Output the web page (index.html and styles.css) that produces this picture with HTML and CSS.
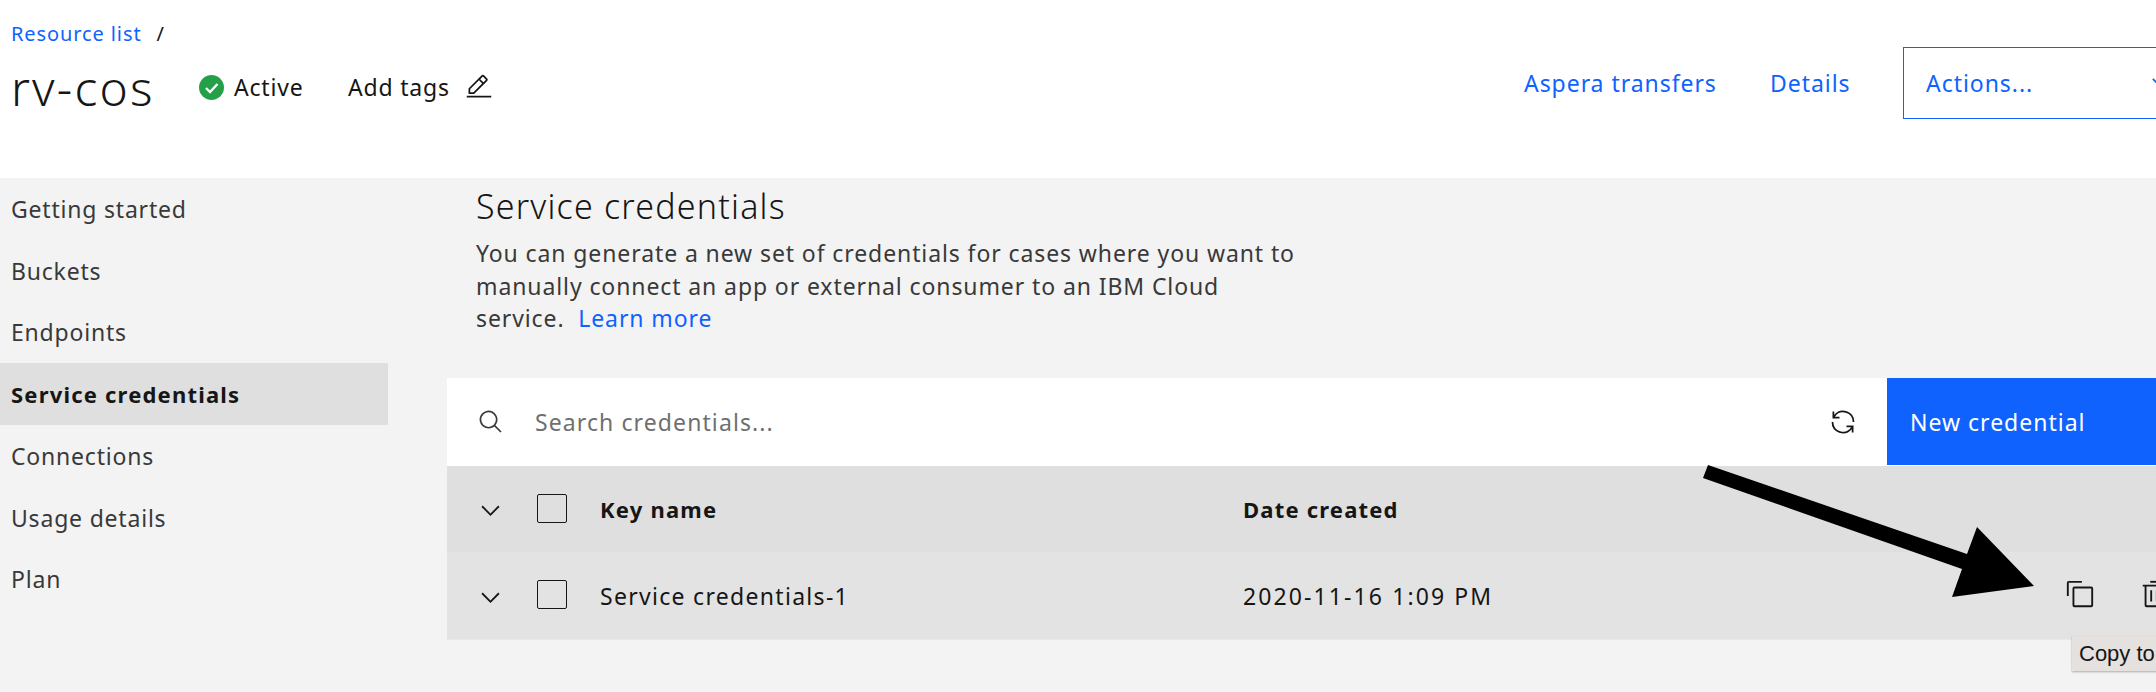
FILE: index.html
```html
<!DOCTYPE html>
<html lang="en">
<head>
    <meta charset="UTF-8">
    <title>rv-cos - Service credentials</title>
    <link rel="stylesheet" href="styles.css">
</head>
<body>

    <header class="page-header">
        <div class="crumbs">
            <a class="crumb-link">Resource list</a>
            <span class="crumb-sep">/</span>
        </div>
        <div class="title-row">
            <div class="title-left">
                <h1 class="name">rv-cos</h1>
                <div class="status">
                    <svg class="status-icon" viewBox="0 0 25 25"><circle cx="12.5" cy="12.5" r="12.5" fill="#24a148"/><path d="M7 13l4 4 7.5-8" fill="none" stroke="#fff" stroke-width="2.4"/></svg>
                    <span>Active</span>
                </div>
                <div class="tags">
                    <span>Add tags</span>
                    <svg class="icon-edit" viewBox="0 0 32 32"><path d="M2 26h28v2H2z"/><path d="M25.4 9c.8-.8.8-2 0-2.8l-3.6-3.6c-.8-.8-2-.8-2.8 0l-15 15V24h6.4l15-15zm-5-5L24 7.6l-3 3L17.4 7l3-3zM6 22v-3.6l10-10 3.6 3.6-10 10H6z"/></svg>
                </div>
            </div>
            <div class="title-right">
                <a class="head-link link-aspera">Aspera transfers</a>
                <a class="head-link link-details">Details</a>
                <div class="actions">
                    <span>Actions...</span>
                    <svg class="icon-chev-blue" viewBox="0 0 32 32"><path d="M16 22L6 12l1.4-1.4 8.6 8.6 8.6-8.6L26 12z"/></svg>
                </div>
            </div>
        </div>
    </header>

    <div class="main">
        <nav class="side">
            <a class="side-item">Getting started</a>
            <a class="side-item">Buckets</a>
            <a class="side-item">Endpoints</a>
            <a class="side-item active">Service credentials</a>
            <a class="side-item">Connections</a>
            <a class="side-item">Usage details</a>
            <a class="side-item">Plan</a>
        </nav>

        <section class="content">
            <div class="intro">
                <h2 class="intro-title">Service credentials</h2>
                <p class="intro-text">You can generate a new set of credentials for cases where you want to manually connect an app or external consumer to an IBM Cloud service.&nbsp; <a class="learn">Learn more</a></p>
            </div>

            <div class="toolbar">
                <svg class="icon-search" viewBox="0 0 32 32"><path d="M29 27.5859l-7.5521-7.5521a11.0177 11.0177 0 1 0-1.4141 1.4141L27.5859 29ZM4 13a9 9 0 1 1 9 9 9.01 9.01 0 0 1-9-9Z"/></svg>
                <span class="placeholder">Search credentials...</span>
                <svg class="icon-renew" viewBox="0 0 32 32"><path d="M12 10H6.78A11 11 0 0 1 27 16h2A13 13 0 0 0 6 7.68V4H4v8h8zM20 22h5.22A11 11 0 0 1 5 16H3a13 13 0 0 0 23 8.32V28h2v-8h-8z"/></svg>
                <div class="new-btn">New credential</div>
            </div>

            <div class="row row-head">
                <svg class="icon-chev" viewBox="0 0 32 32"><path d="M16 22L6 12l1.4-1.4 8.6 8.6 8.6-8.6L26 12z"/></svg>
                <span class="check"></span>
                <span class="col-name">Key name</span>
                <span class="col-date">Date created</span>
            </div>
            <div class="row row-body">
                <svg class="icon-chev" viewBox="0 0 32 32"><path d="M16 22L6 12l1.4-1.4 8.6 8.6 8.6-8.6L26 12z"/></svg>
                <span class="check"></span>
                <span class="col-name">Service credentials-1</span>
                <span class="col-date">2020-11-16 1:09 PM</span>
                <div class="row-icons">
                    <svg class="icon-row" viewBox="0 0 32 32"><path d="M28 10v18H10V10h18m0-2H10a2 2 0 0 0-2 2v18a2 2 0 0 0 2 2h18a2 2 0 0 0 2-2V10a2 2 0 0 0-2-2Z"/><path d="M4 18H2V4a2 2 0 0 1 2-2h14v2H4Z"/></svg>
                    <svg class="icon-row" viewBox="0 0 32 32"><path d="M12 12h2v12h-2z"/><path d="M18 12h2v12h-2z"/><path d="M4 6v2h2v20a2 2 0 0 0 2 2h16a2 2 0 0 0 2-2V8h2V6zm4 22V8h16v20z"/><path d="M12 2h8v2h-8z"/></svg>
                </div>
            </div>
        </section>
    </div>

    <!-- annotation drawn on top of the screenshot -->
    <svg class="arrow" viewBox="0 0 2156 692"><path d="M1708 465L1703 478L1962 569L1952 597L2034 586L1977 527L1967 554Z"/></svg>
    <div class="tooltip">Copy to clipboard</div>

</body>
</html>
```

FILE: styles.css
```css
* {
    box-sizing: border-box;
}

html, body {
    margin: 0;
    padding: 0;
}

body {
    position: relative;
    width: 2156px;
    height: 692px;
    overflow: hidden;
    background-color: #f3f3f3;
    font-family: "Noto Sans", sans-serif;
    font-size: 23px;
    letter-spacing: 0.8px;
    color: #161616;
}

svg {
    display: block;
    flex-shrink: 0;
    fill: #161616;
}

/* header */
.page-header {
    height: 178px;
    padding: 19px 0 0 11px;
    background-color: #fff;
}

.crumbs {
    display: flex;
    align-items: center;
    gap: 15px;
    height: 28px;
    font-size: 20px;
    letter-spacing: 0.9px;
}

.crumb-link {
    color: #0f62fe;
}

.title-row {
    display: flex;
    justify-content: space-between;
}

.title-left {
    display: flex;
    align-items: center;
    height: 72px;
    margin-top: 4px;
}

.name {
    margin: 0;
    width: 188px;
    font-size: 48px;
    font-weight: 300;
    letter-spacing: 2.2px;
}

.status {
    display: flex;
    align-items: center;
    gap: 10px;
    width: 149px;
}

.status-icon {
    width: 25px;
    height: 25px;
}

.tags {
    display: flex;
    align-items: center;
    gap: 15px;
}

.icon-edit {
    width: 28px;
    height: 28px;
}

.title-right {
    display: flex;
    align-items: center;
    width: 632px;
    height: 72px;
    letter-spacing: 0.95px;
    color: #0f62fe;
}

.link-aspera {
    width: 246px;
}

.link-details {
    width: 133px;
}

.actions {
    display: flex;
    align-items: center;
    justify-content: space-between;
    flex: 1;
    height: 72px;
    padding: 0 0 0 22px;
    margin-right: -20px;
    border: 1px solid #0f62fe;
}

.icon-chev-blue {
    width: 28px;
    height: 28px;
    fill: #0f62fe;
}

/* body */
.main {
    display: flex;
}

.side {
    width: 388px;
}

.side-item {
    display: flex;
    align-items: center;
    height: 61.75px;
    padding-left: 11px;
    color: #393939;
}

.side-item.active {
    background-color: #dfdfdf;
    font-size: 22px;
    font-weight: 700;
    letter-spacing: 1.2px;
    color: #161616;
}

.content {
    flex: 1;
    min-width: 0;
    margin-left: 59px;
}

.intro {
    height: 200px;
    padding-left: 29px;
}

.intro-title {
    margin: 0 0 3px;
    font-size: 34px;
    font-weight: 300;
    letter-spacing: 1.2px;
    line-height: 56px;
}

.intro-text {
    width: 835px;
    margin: 0;
    letter-spacing: 0.9px;
    line-height: 32.5px;
    color: #393939;
}

.learn {
    color: #0f62fe;
}

.toolbar {
    display: flex;
    align-items: center;
    height: 88px;
    padding-left: 31px;
    background-color: #fff;
}

.icon-search {
    width: 26px;
    height: 26px;
    fill: #393939;
}

.placeholder {
    flex: 1;
    margin-left: 31px;
    letter-spacing: 1.1px;
    color: #6f6f6f;
}

.icon-renew {
    width: 28px;
    height: 28px;
    margin-right: 30px;
}

.new-btn {
    display: flex;
    align-items: center;
    align-self: flex-start;
    width: 269px;
    height: 87px;
    padding-left: 23px;
    letter-spacing: 1px;
    background-color: #0f62fe;
    color: #fff;
}

.row {
    display: flex;
    align-items: center;
    padding-left: 29px;
}

.row-head {
    height: 86px;
    background-color: #dfdfdf;
    font-size: 22px;
    font-weight: 700;
    letter-spacing: 1.2px;
}

.row-body {
    height: 88px;
    background-color: #e3e3e3;
    border-bottom: 1px solid #e9e9e9;
}

.row-body .col-name {
    letter-spacing: 1.3px;
}

.row-body .col-date {
    letter-spacing: 2.1px;
}

.icon-chev {
    width: 29px;
    height: 29px;
    margin-top: 3px;
}

.check {
    width: 30px;
    height: 29px;
    margin: -2px 0 0 32px;
    border: 1px solid #161616;
    border-radius: 2px;
}

.col-name {
    width: 643px;
    margin-left: 33px;
}

.row-icons {
    display: flex;
    gap: 44px;
    margin: 0 -13px 0 auto;
}

.icon-row {
    width: 30px;
    height: 30px;
    margin-top: -4px;
}

/* overlays */
.arrow {
    position: absolute;
    top: 0;
    left: 0;
    width: 2156px;
    height: 692px;
    fill: #000;
}

.tooltip {
    position: absolute;
    top: 636px;
    left: 2072px;
    height: 35px;
    padding: 0 7px;
    background-color: #e5e1df;
    box-shadow: 0 1px 2px rgba(0, 0, 0, 0.3);
    font-family: "Liberation Sans", sans-serif;
    font-size: 22px;
    letter-spacing: 0;
    line-height: 35px;
    white-space: nowrap;
}
```
